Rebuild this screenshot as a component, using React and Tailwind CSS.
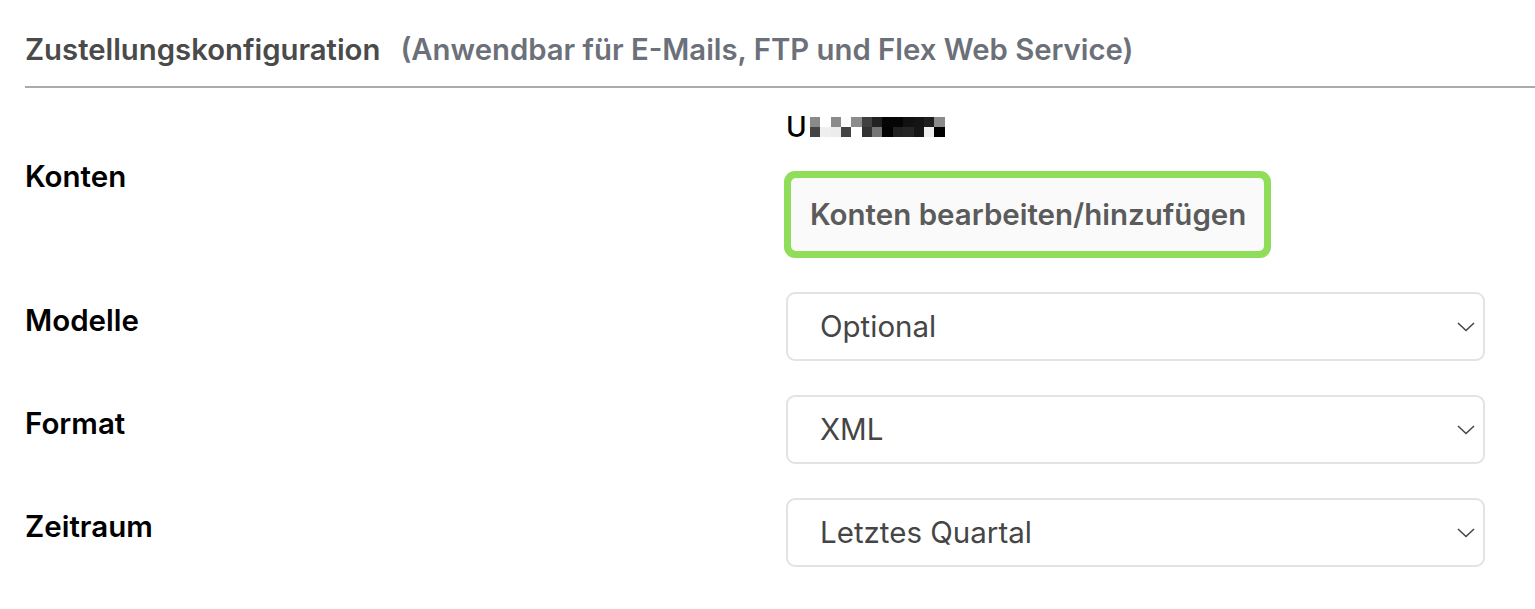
import React from 'react';

const blurTop = ['#8a8a8a', '#ffffff', '#8a8a8a', '#fdfdfd', '#8c8c8c', '#404040', '#222222', '#050505', '#050505', '#111111', '#141414', '#1e1e1e', '#8a8a8a'];
const blurBottom = ['#444444', '#efefef', '#ececec', '#444444', '#ffffff', '#333333', '#757575', '#020202', '#222222', '#252525', '#161616', '#eeeeee', '#000000'];

const Chevron = () => (
  <svg width="18" height="10" viewBox="0 0 18 10" fill="none">
    <polyline points="1,1 9,8.5 17,1" stroke="#474747" strokeWidth="1.6" />
  </svg>
);

const SelectBox = ({ value }) => (
  <div className="flex h-[69px] w-[699px] items-center justify-between rounded-[9px] border-2 border-[#e3e3e3] bg-white pl-[32px] pr-[8px]">
    <span className="text-[29.5px] text-[#454545]">{value}</span>
    <Chevron />
  </div>
);

const Label = ({ children, className = '' }) => (
  <div className={`text-[29.5px] leading-[36px] font-semibold text-black ${className}`}>{children}</div>
);

export default function App() {
  return (
    <div className="min-h-screen bg-white pl-[25px] font-['Inter','Liberation_Sans',sans-serif]">
      {/* Header */}
      <div className="flex h-[86px] items-center pt-[14px] text-[29.3px] font-semibold">
        <span className="text-[#4a4a4a]">Zustellungskonfiguration</span>
        <span className="ml-[20px] text-[#6b7079]">(Anwendbar für E-Mails, FTP und Flex Web Service)</span>
      </div>
      <div className="border-b-2 border-[#ababab]" />

      {/* Form */}
      <div className="grid grid-cols-[761px_699px]">
        <Label className="pt-[70px]">Konten</Label>
        <div className="pt-[28px]">
          <div className="flex h-[22px] items-center">
            <span className="text-[28px] font-medium leading-none text-black">U</span>
            <div className="ml-[3px] flex flex-col">
              <div className="flex">
                {blurTop.map((c, i) => (
                  <div key={i} className="h-[10px] w-[10.4px]" style={{ background: c }} />
                ))}
              </div>
              <div className="flex">
                {blurBottom.map((c, i) => (
                  <div key={i} className="h-[10px] w-[10.4px]" style={{ background: c }} />
                ))}
              </div>
            </div>
          </div>
          <div className="-ml-[2px] mt-[33px] inline-flex rounded-[11px] bg-[#8fdd58] p-[7px]">
            <button className="h-[73px] rounded-[5px] bg-[#fafafa] pl-[19px] pr-[18px] text-[29.5px] font-semibold text-[#5b5b5b]">
              Konten bearbeiten/hinzufügen
            </button>
          </div>
        </div>

        <Label className="pt-[44px]">Modelle</Label>
        <div className="pt-[34px]">
          <SelectBox value="Optional" />
        </div>

        <Label className="pt-[44px]">Format</Label>
        <div className="pt-[34px]">
          <SelectBox value="XML" />
        </div>

        <Label className="pt-[44px]">Zeitraum</Label>
        <div className="pt-[34px]">
          <SelectBox value="Letztes Quartal" />
        </div>
      </div>
    </div>
  );
}
